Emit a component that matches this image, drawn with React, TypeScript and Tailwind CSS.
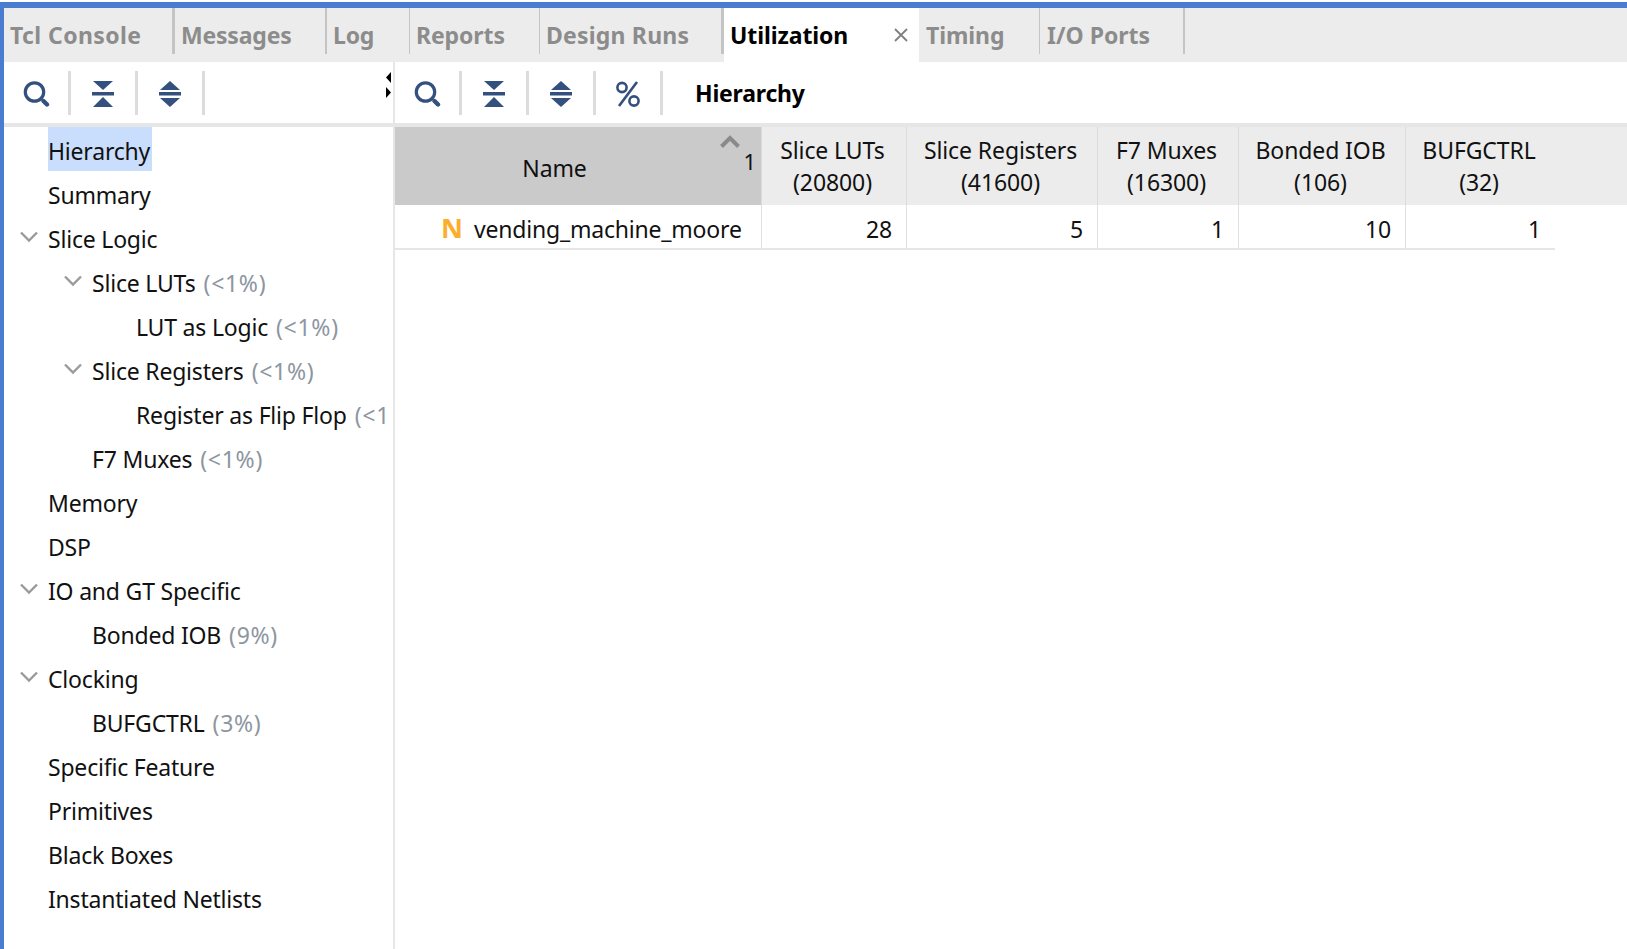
const font = { fontFamily: '"Noto Sans", "Open Sans", sans-serif' };

const tabs = [
  { label: "Tcl Console", w: "w-[171px]", sep: "w-[3px]", tr: "tracking-[0.4px]" },
  { label: "Messages", w: "w-[152px]", sep: "w-[2px]", tr: "tracking-[-0.2px]" },
  { label: "Log", w: "w-[83px]", sep: "w-[1px]", tr: "tracking-[-0.2px]" },
  { label: "Reports", w: "w-[130px]", sep: "w-[1px]", tr: "tracking-[-0.1px]" },
  { label: "Design Runs", w: "w-[184px]", sep: "w-[3px]", tr: "tracking-[0.2px]" },
];

function Search() {
  return (
    <svg width="28" height="28" viewBox="0 0 28 28" fill="none">
      <circle cx="12.5" cy="12" r="9.2" stroke="#34507f" strokeWidth="3.2" />
      <path d="M21.5 21l3.5 3.5" stroke="#34507f" strokeWidth="4.4" strokeLinecap="round" />
    </svg>
  );
}
function Collapse() {
  return (
    <svg width="24" height="28" viewBox="0 0 24 28" fill="#34507f">
      <path d="M2 1h20L12 10z" />
      <rect x="1" y="12" width="22" height="3.5" />
      <path d="M12 17l10 10H2z" />
    </svg>
  );
}
function Expand() {
  return (
    <svg width="24" height="28" viewBox="0 0 24 28" fill="#34507f">
      <path d="M12 1l10 9H2z" />
      <rect x="1" y="12" width="22" height="3.5" />
      <path d="M2 18h20L12 27z" />
    </svg>
  );
}
function Percent() {
  return (
    <svg width="26" height="28" viewBox="0 0 26 28" fill="none" stroke="#34507f" strokeWidth="2.6">
      <circle cx="7" cy="7.5" r="4.6" />
      <circle cx="19" cy="21" r="4.6" />
      <path d="M22 2L4 26" />
    </svg>
  );
}
function Sep() {
  return <div className="w-[3px] h-[44px] bg-[#dcdcdc] shrink-0" />;
}
function Tool({ children }: { children: React.ReactNode }) {
  return <div className="w-[64px] pt-[2px] flex items-center justify-center shrink-0">{children}</div>;
}
function Chevron() {
  return (
    <svg width="18" height="12" viewBox="0 0 18 12" fill="none" stroke="#9a9a9a" strokeWidth="2.4">
      <path d="M1 1.5l8 8 8-8" />
    </svg>
  );
}

const tree: { t: string; p?: string; lvl: number; chev?: boolean; sel?: boolean }[] = [
  { t: "Hierarchy", lvl: 0, sel: true },
  { t: "Summary", lvl: 0 },
  { t: "Slice Logic", lvl: 0, chev: true },
  { t: "Slice LUTs", p: "(<1%)", lvl: 1, chev: true },
  { t: "LUT as Logic", p: "(<1%)", lvl: 2 },
  { t: "Slice Registers", p: "(<1%)", lvl: 1, chev: true },
  { t: "Register as Flip Flop", p: "(<1%)", lvl: 2 },
  { t: "F7 Muxes", p: "(<1%)", lvl: 1 },
  { t: "Memory", lvl: 0 },
  { t: "DSP", lvl: 0 },
  { t: "IO and GT Specific", lvl: 0, chev: true },
  { t: "Bonded IOB", p: "(9%)", lvl: 1 },
  { t: "Clocking", lvl: 0, chev: true },
  { t: "BUFGCTRL", p: "(3%)", lvl: 1 },
  { t: "Specific Feature", lvl: 0 },
  { t: "Primitives", lvl: 0 },
  { t: "Black Boxes", lvl: 0 },
  { t: "Instantiated Netlists", lvl: 0 },
];

const cols = [
  { a: "Slice LUTs", b: "(20800)", w: "w-[145px]", v: "28" },
  { a: "Slice Registers", b: "(41600)", w: "w-[191px]", v: "5" },
  { a: "F7 Muxes", b: "(16300)", w: "w-[141px]", v: "1" },
  { a: "Bonded IOB", b: "(106)", w: "w-[167px]", v: "10" },
  { a: "BUFGCTRL", b: "(32)", w: "w-[150px]", v: "1" },
];

export default function App() {
  return (
    <div style={font} className="w-[1627px] h-[949px] overflow-hidden bg-white pt-[2px] text-[23px] text-[#111] tracking-[-0.2px]">
      <div className="h-[6px] bg-[#4a7cd0]" />
      <div className="flex h-[941px] border-l-[4px] border-[#4a7cd0]">
        <div className="flex-1 flex flex-col min-w-0">
          <div className="h-[54px] bg-[#ececec] flex shrink-0">
            {tabs.map((t) => (
              <div key={t.label} className={`${t.w} h-[46px] flex items-center justify-between pl-[6px] shrink-0`}>
                <span className={`font-bold text-[#8c8c8c] whitespace-nowrap pt-[8px] text-[23px] ${t.tr}`}>{t.label}</span>
                <div className={`${t.sep} h-[46px] bg-[#c4c4c4]`} />
              </div>
            ))}
            <div className="w-[195px] h-[54px] bg-white flex items-center justify-between pl-[6px] pr-[10px] shrink-0">
              <span className="font-bold text-[#000] pt-[1px] tracking-[-0.1px]">Utilization</span>
              <svg width="16" height="16" viewBox="0 0 16 16" stroke="#808080" strokeWidth="1.8">
                <path d="M2 2l12 12M14 2L2 14" />
              </svg>
            </div>
            <div className="w-[121px] h-[46px] flex items-center justify-between pl-[7px] shrink-0">
              <span className="font-bold text-[#8c8c8c] pt-[8px] tracking-[-0.1px]">Timing</span>
              <div className="w-[1px] h-[46px] bg-[#c4c4c4]" />
            </div>
            <div className="w-[145px] h-[46px] flex items-center justify-between pl-[7px] shrink-0">
              <span className="font-bold text-[#8c8c8c] pt-[8px] tracking-[0px]">I/O Ports</span>
              <div className="w-[2px] h-[46px] bg-[#c4c4c4]" />
            </div>
          </div>
          <div className="flex flex-1 min-h-0">
            <div className="w-[391px] shrink-0 flex flex-col border-r-[2px] border-[#e6e6e6]">
              <div className="h-[61px] flex items-center relative shrink-0">
                <Tool><Search /></Tool>
                <Sep />
                <Tool><Collapse /></Tool>
                <Sep />
                <Tool><Expand /></Tool>
                <Sep />
                <svg className="absolute right-[0px] top-[10px]" width="8" height="26" viewBox="0 0 8 26" fill="#000">
                  <path d="M6 0v11L1 5.5zM1 15l5 5.5L1 26z" />
                </svg>
              </div>
              <div className="h-[4px] bg-[#e6e6e6] shrink-0" />
              <div className="flex-1 overflow-hidden pr-[7px]">
                {tree.map((r) => (
                  <div key={r.t} className={`h-[44px] pt-[4px] flex items-center whitespace-nowrap overflow-hidden ${r.lvl === 0 ? "pl-[44px]" : r.lvl === 1 ? "pl-[88px]" : "pl-[132px]"} relative`}>
                    {r.chev && (
                      <span className={`absolute top-[16px] ${r.lvl === 0 ? "left-[16px]" : "left-[60px]"}`}>
                        <Chevron />
                      </span>
                    )}
                    <span className={r.sel ? "bg-[#c9ddfc] h-[44px] -mt-[4px] leading-[48px] w-[104px]" : ""}>{r.t}</span>
                    {r.p && <span className="text-[#8d96a0] ml-[8px] tracking-[0.7px]">{r.p}</span>}
                  </div>
                ))}
              </div>
            </div>
            <div className="flex-1 flex flex-col min-w-0">
              <div className="h-[61px] flex items-center shrink-0">
                <Tool><Search /></Tool>
                <Sep />
                <Tool><Collapse /></Tool>
                <Sep />
                <Tool><Expand /></Tool>
                <Sep />
                <Tool><Percent /></Tool>
                <Sep />
                <span className="font-bold ml-[32px] pt-[2px] text-[#000] tracking-[-0.2px]">Hierarchy</span>
              </div>
              <div className="h-[4px] bg-[#e6e6e6] shrink-0" />
              <div className="flex h-[78px] bg-[#ececec] shrink-0 leading-[32px] tracking-[-0.1px]">
                <div className="w-[366px] shrink-0 bg-[#cacaca] flex items-center justify-center pr-[47px] pt-[4px] relative">
                  <span>Name</span>
                  <svg className="absolute right-[21px] top-[8px]" width="20" height="13" viewBox="0 0 20 13" fill="none" stroke="#8a8a8a" strokeWidth="4">
                    <path d="M1.5 11.5L10 3l8.5 8.5" />
                  </svg>
                  <span className="absolute right-[5px] top-[18px] text-[22px]">1</span>
                </div>
                {cols.map((c) => (
                  <div key={c.a} className={`${c.w} shrink-0 border-l border-[#dcdcdc] flex flex-col items-center justify-center pr-[3px] text-center whitespace-nowrap`}>
                    <span>{c.a}</span>
                    <span>{c.b}</span>
                  </div>
                ))}
              </div>
              <div className="flex h-[45px] shrink-0 w-[1160px] border-b-[2px] border-[#e6e6e6]">
                <div className="w-[366px] shrink-0 flex items-center pt-[5px]">
                  <span className="w-[20px] ml-[46px] mr-[13px] text-[#fbae2d] font-bold text-[27px] leading-[30px] -mt-[3px]">N</span>
                  <span className="tracking-[-0.2px]">vending_machine_moore</span>
                </div>
                {cols.map((c) => (
                  <div key={c.a} className={`${c.w} shrink-0 border-l border-[#e0e0e0] flex items-center justify-end pr-[14px] pt-[5px]`}>
                    {c.v}
                  </div>
                ))}
                <div className="w-[1px] bg-[#e0e0e0]" />
              </div>
            </div>
          </div>
        </div>
      </div>
    </div>
  );
}
